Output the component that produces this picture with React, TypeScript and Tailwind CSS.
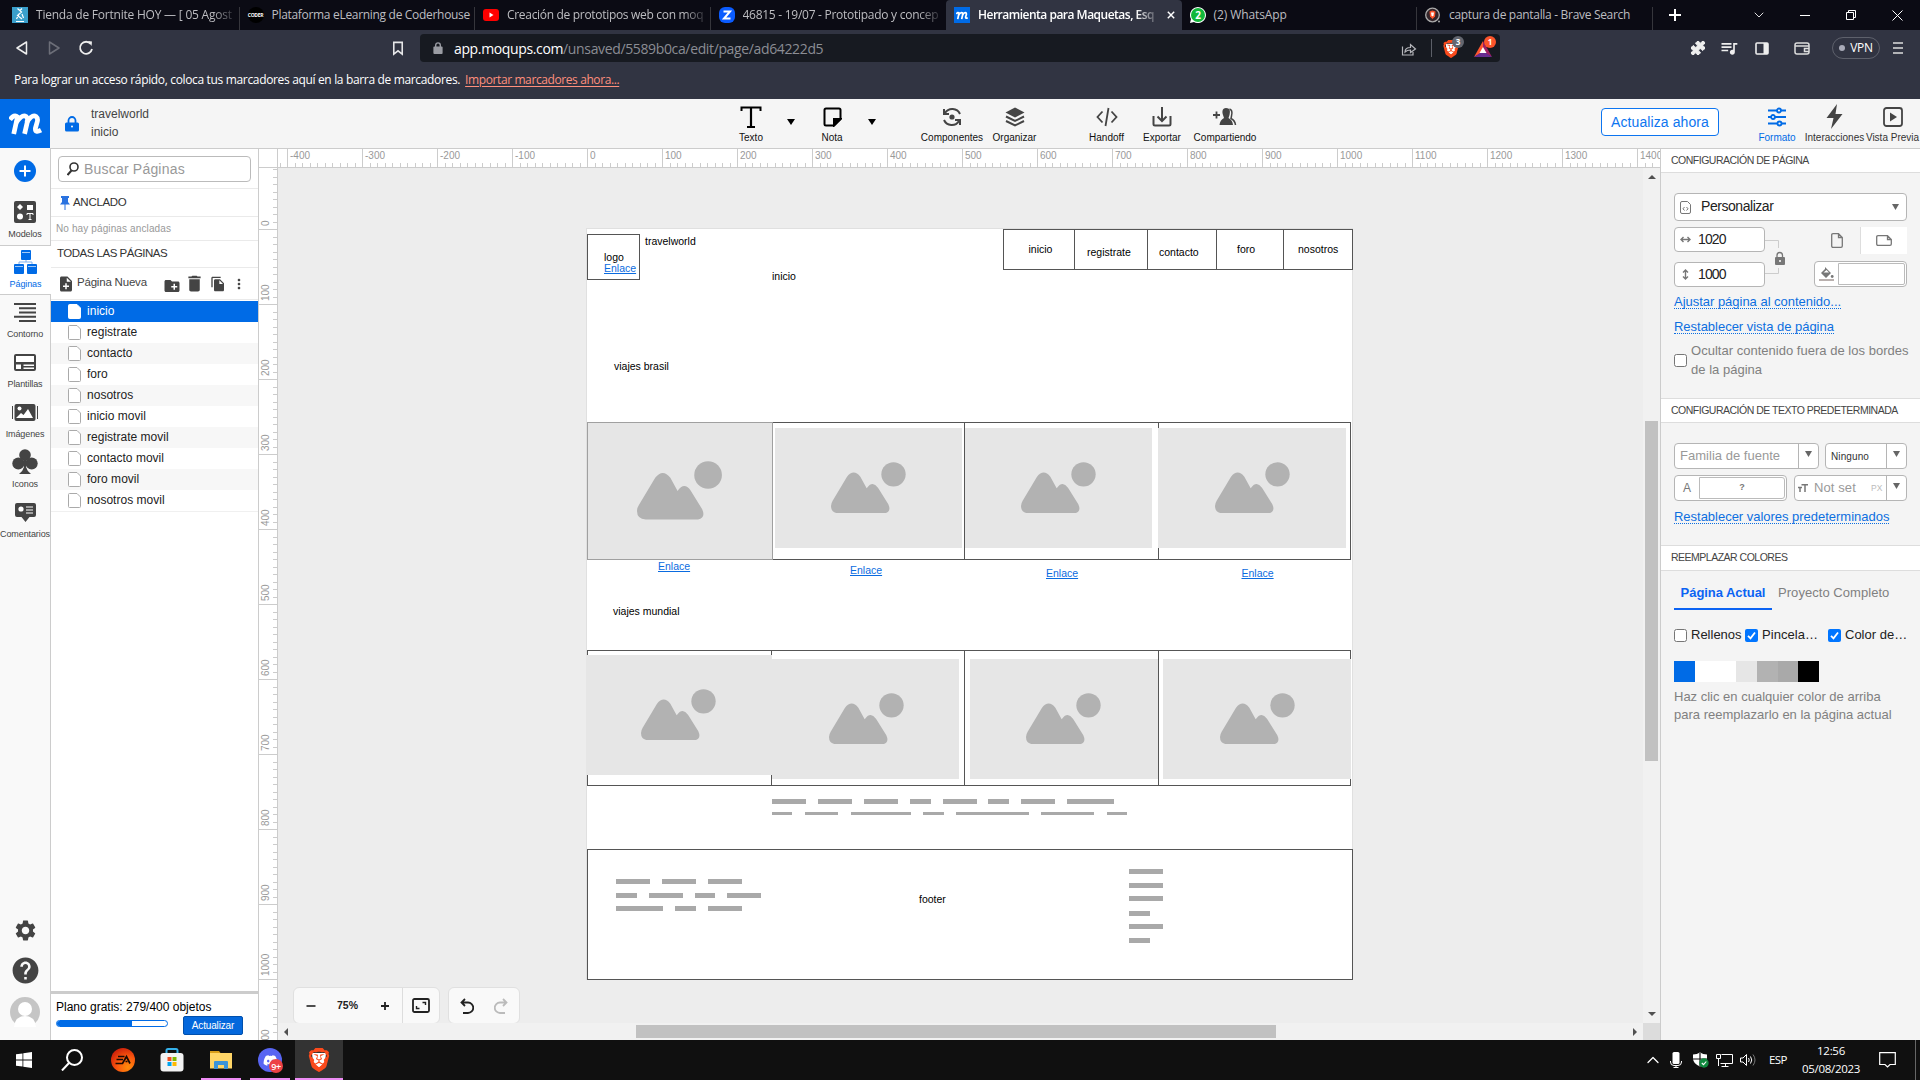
import React from "react";
import { Puzzle, ChevronDown, ChevronUp } from "lucide-react";
import { FaDiscord } from "react-icons/fa";
import { MdSettings, MdHelp, MdDelete, MdCreateNewFolder, MdNoteAdd, MdFileCopy, MdMoreVert, MdQueueMusic } from "react-icons/md";
import { SiBrave } from "react-icons/si";

type Box = [number, number, number, number];

const ARIAL = "font-['Liberation_Sans',Arial,sans-serif]";
const SEGOE = "font-['Open_Sans','Noto_Sans',sans-serif]";

/* ---------- Browser chrome ---------- */

function MGlyph({ className }: { className: string }) {
  return (
    <svg viewBox="0 0 35 23" className={className} fill="none" stroke="#fff" strokeWidth="5" strokeLinejoin="round">
      <path d="M1 7Q5.500 0.500 9 4L5 22" />
      <path d="M7.500 10Q14 1 18 3.500Q20.500 5.500 19.500 9L16.500 22" />
      <path d="M18.500 10Q24.500 1 28.500 3.500Q31 5.500 30 9L28 16Q27.500 21.500 34 18" />
    </svg>
  );
}

function BraveLion({ className }: { className: string }) {
  return (
    <div className={"relative " + className}>
      <svg viewBox="0 0 24 24" className="absolute inset-0 size-full"><path d="M5 5H19L18 15L12 20L6 15Z" fill="#fff" /></svg>
      <SiBrave className="relative size-full text-[#fb4a1c]" />
    </div>
  );
}

function TabIcon({ kind }: { kind: string }) {
  if (kind === "fort")
    return (
      <div className="flex size-4 items-center justify-center bg-[#3a9fcb]">
        <svg viewBox="0 0 16 16" className="size-4" fill="none" stroke="#fff" strokeWidth="1.2"><path d="M5.500 1.500L9.500 5L5.500 8.500L10 12M10 1.500L8 3.500M7 7L4.500 12M10 7L11.500 11M4 14.500H12" /></svg>
      </div>
    );
  if (kind === "coder")
    return <div className="flex size-4 items-center justify-center rounded-full bg-black text-[5px] leading-none font-bold tracking-[-0.3px] text-white">CODER</div>;
  if (kind === "yt")
    return (
      <svg viewBox="0 0 16 16" className="size-4"><rect y="2" width="16" height="12" rx="3" fill="#f00" /><path d="M6.500 5.500L10.500 8L6.500 10.500Z" fill="#fff" /></svg>
    );
  if (kind === "z")
    return (
      <svg viewBox="0 0 16 16" className="size-4"><rect width="16" height="16" rx="6" fill="#0b5cff" /><path d="M4.500 4.500H11L5 11.500H11.500" fill="none" stroke="#fff" strokeWidth="2" /></svg>
    );
  if (kind === "m")
    return <div className="flex size-4 items-center justify-center bg-[#006be6]"><MGlyph className="h-[9px] w-3" /></div>;
  if (kind === "wa")
    return (
      <svg viewBox="0 0 16 16" className="size-4"><path d="M0 16L1 12A8 8 0 1 1 4 15Z" fill="#fff" /><circle cx="8" cy="8" r="7" fill="#12b83b" /><text x="8" y="11.500" textAnchor="middle" fontSize="10" fontWeight="700" fill="#fff" fontFamily="Open Sans">2</text></svg>
    );
  return (
    <svg viewBox="0 0 16 16" className="size-4"><circle cx="7.500" cy="8" r="6.800" fill="#33252a" stroke="#aaa" strokeWidth="1.300" /><path d="M4.500 4.500L7.500 3.500L10.500 4.500L10 9.500L7.500 12L5 9.500Z" fill="#fb542b" /><path d="M6 5.500H9L8.500 8.500L7.500 9.500L6.500 8.500Z" fill="#fff" /><circle cx="14" cy="14.500" r="1" fill="#aaa" /></svg>
  );
}

const TABS = [
  { kind: "fort", title: "Tienda de Fortnite HOY — [ 05 Agost", cls: "tracking-[-0.22px]", fade: true },
  { kind: "coder", title: "Plataforma eLearning de Coderhouse", cls: "tracking-[-0.31px]" },
  { kind: "yt", title: "Creación de prototipos web con moq", cls: "tracking-[-0.31px]", fade: true },
  { kind: "z", title: "46815 - 19/07 - Prototipado y concep", cls: "tracking-[-0.27px]", fade: true },
  { kind: "m", title: "Herramienta para Maquetas, Esq", cls: "font-semibold tracking-[-0.5px]", active: true, fade: true },
  { kind: "wa", title: "(2) WhatsApp", cls: "tracking-[-0.1px]" },
  { kind: "brave", title: "captura de pantalla - Brave Search", cls: "tracking-[-0.31px]" },
];

function TabStrip() {
  return (
    <div className="flex h-[30px] bg-[#0b0b14] pl-1">
      {TABS.map((t, i) => (
        <div
          key={t.kind}
          className={
            "flex w-[235.5px] shrink-0 items-center pl-2 " +
            (t.active ? "rounded-t-[4px] bg-[#313442]" : "text-[#bdbdc1]")
          }
        >
          <TabIcon kind={t.kind} />
          <div className={"ml-2 text-[12px] whitespace-nowrap " + t.cls + (t.active ? " w-[180px] text-white" : " w-[200px]")}>
            <span className={t.fade ? "[mask-image:linear-gradient(to_right,#000_90%,rgba(0,0,0,0.25))]" : ""}>{t.title}</span>
          </div>
          {t.active && (
            <svg viewBox="0 0 10 10" className="ml-[9px] size-2" stroke="#fff" strokeWidth="1.800"><path d="M1 1L9 9M9 1L1 9" /></svg>
          )}
          {!t.active && i !== 3 && <div className="ml-auto h-[23px] w-px self-end bg-[#36363c]" />}
        </div>
      ))}
      <div className="flex flex-1 items-center pl-[16px]">
        <svg viewBox="0 0 12 12" className="size-3" stroke="#fff" strokeWidth="2"><path d="M6 0V12M0 6H12" /></svg>
        <ChevronDown className="ml-[70px] size-4 text-white" strokeWidth={1.300} />
        <svg viewBox="0 0 10 10" className="ml-[33px] size-[10px]" stroke="#fff"><path d="M0 5.500H10" /></svg>
        <svg viewBox="0 0 12 12" className="ml-[35px] size-[12px]" fill="none" stroke="#fff"><path d="M1.500 3.500H8.500V10.500H1.500ZM3.500 3.500V1.500H10.500V8.500H8.500" /></svg>
        <svg viewBox="0 0 11 11" className="ml-[35px] size-[11px]" stroke="#fff"><path d="M0.500 0.500L10.500 10.500M10.500 0.500L0.500 10.500" /></svg>
      </div>
    </div>
  );
}

function NavBar() {
  return (
    <div className="flex h-9 items-center">
      <svg viewBox="0 0 12 14" className="ml-4 h-[14px] w-3" fill="none" stroke="#eee" strokeWidth="1.500" strokeLinejoin="round"><path d="M10.500 1V13L1 7Z" /></svg>
      <svg viewBox="0 0 12 14" className="ml-5 h-[14px] w-3" fill="none" stroke="#6c6e78" strokeWidth="1.500" strokeLinejoin="round"><path d="M1.500 1V13L11 7Z" /></svg>
      <svg viewBox="0 0 16 16" className="ml-[18px] size-4" fill="none" stroke="#eee" strokeWidth="1.800"><path d="M12.800 4A6 6 0 1 0 14 9" /><path d="M10 1L14 1.500L13.500 6Z" fill="#eee" stroke="none" /></svg>
      <svg viewBox="0 0 12 16" className="ml-[298px] h-[15px] w-3" fill="none" stroke="#e6e6e8" strokeWidth="1.700"><path d="M1.500 1.500H10.500V14L6 10.500L1.500 14Z" /></svg>
      <div className="ml-4 flex h-7 w-[1080px] items-center rounded-[4px] bg-[#171a21]">
        <svg viewBox="0 0 10 13" className="ml-[13px] h-3 w-[10px]"><path d="M2.500 6V3.500A2.500 2.500 0 0 1 7.500 3.500V6" fill="none" stroke="#9a9ca3" strokeWidth="1.500" /><rect y="5" width="10" height="8" rx="1" fill="#9a9ca3" /></svg>
        <div className="ml-[11px] w-[936px] text-[14px] tracking-[-0.36px] text-[#8b8d94]"><span className="text-white">app.moqups.com</span>/unsaved/5589b0ca/edit/page/ad64222d5</div>
        <svg viewBox="0 0 16 14" className="mt-px ml-[11px] h-[14px] w-4" fill="none" stroke="#b5b6bb" strokeWidth="1.200"><path d="M1.500 4.500V13H12V10M4 10Q4 5.500 9.500 5.500V2.500L14.500 7L9.500 10.500V8Q6 8 4 10Z" /></svg>
        <div className="ml-3.5 h-[18px] w-px bg-[#5c5f68]" />
        <div className="relative ml-[10px] h-[22px] w-5">
          <BraveLion className="mt-[3px] size-[18px]" />
          <div className="absolute -top-px left-2.5 flex size-3 items-center justify-center rounded-full bg-[#63666f] text-[8px] font-bold text-white">3</div>
        </div>
        <div className="relative ml-3 h-[22px] w-6">
          <svg viewBox="0 0 18 16" className="mt-1 h-4 w-[18px]"><path d="M9 0L0 16L9 11Z" fill="#ff5630" /><path d="M9 0L18 16L9 11Z" fill="#9e1f63" /><path d="M0 16H18L9 10Z" fill="#662d91" /><path d="M9 6L12.500 12H5.500Z" fill="#fff" /></svg>
          <div className="absolute -top-px left-2.5 flex size-3 items-center justify-center rounded-full bg-[#fb542b] text-[8px] font-bold text-white">1</div>
        </div>
      </div>
      <Puzzle className="ml-[190px] size-4 fill-[#eee] text-[#eee]" strokeWidth={1.500} />
      <MdQueueMusic className="ml-[13px] size-[20px] text-[#eee]" />
      <svg viewBox="0 0 14 13" className="ml-[16px] h-[13px] w-[14px]"><rect x="1" y="1" width="12" height="11" rx="1" fill="none" stroke="#eee" strokeWidth="1.600" /><path d="M8.500 1H13V12H8.500Z" fill="#eee" /></svg>
      <svg viewBox="0 0 16 13" className="ml-[25px] h-[13px] w-4" fill="none" stroke="#ddd" strokeWidth="1.500"><rect x="1" y="1" width="14" height="11" rx="2" /><path d="M1 4H15M15 6.500H10.500V9.500H15" /></svg>
      <div className="ml-[22px] flex h-[22px] w-12 items-center justify-center gap-[5px] rounded-full border border-[#5e616c] text-[12px] tracking-[-0.3px] text-white"><div className="size-1.5 rounded-full bg-[#a9abb8]" />VPN</div>
      <svg viewBox="0 0 10 12" className="ml-[13px] h-3 w-[10px]" stroke="#ddd" strokeWidth="1.500"><path d="M0 1H10M0 6H10M0 11H10" /></svg>
    </div>
  );
}

/* ---------- App header ---------- */

function Tool({ label, width, children, color = "text-[#111]" }: { label: string; width: string; children: React.ReactNode; color?: string }) {
  return (
    <div className={"flex flex-col items-center " + width + " " + color}>
      <div className="mt-1.5 flex h-[23px] items-center">{children}</div>
      <div className="mt-[4px] text-[10px] leading-3 whitespace-nowrap">{label}</div>
    </div>
  );
}

function Arrow() {
  return <svg viewBox="0 0 8 6" className="mt-5 h-[6px] w-2"><path d="M0 0H8L4 6Z" fill="#000" /></svg>;
}

function AppHeader() {
  return (
    <div className="flex h-[50px] border-b border-[#ccc] bg-[#f5f5f5]">
      <div className="flex h-[50px] w-[50px] items-center justify-center bg-[#006be6]"><MGlyph className="h-[22px] w-[33px]" /></div>
      <svg viewBox="0 0 14 16" className="mt-[17px] ml-[15px] h-4 w-[14px]"><path d="M3.500 8V4.500A3.500 3.500 0 0 1 10.500 4.500V8" fill="none" stroke="#006be6" strokeWidth="1.800" /><rect y="6.500" width="14" height="9" rx="1.500" fill="#006be6" /><circle cx="7" cy="10.500" r="1" fill="#fff" /></svg>
      <div className="ml-3 w-[629px] pt-1.5 text-[12px] leading-[18px] text-[#444]">travelworld<br />inicio</div>
      <Tool label="Texto" width="w-[62px]">
        <svg viewBox="0 0 22 22" className="size-[22px]" fill="none" stroke="#000" strokeWidth="2"><path d="M1.500 5V1.500H20.500V5" /><path d="M11 1V21M7 21H15" strokeWidth="2.200" /></svg>
      </Tool>
      <div className="w-[17px] pl-[5px]"><Arrow /></div>
      <Tool label="Nota" width="w-[66px]">
        <svg viewBox="0 0 19 20" className="h-5 w-[19px]" fill="none" stroke="#000" strokeWidth="2"><path d="M3 1.500H16Q17.500 1.500 17.500 3V12L11 18.500H3Q1.500 18.500 1.500 17V3Q1.500 1.500 3 1.500Z" /><path d="M11 18.500V12H17.500Z" fill="#000" /></svg>
      </Tool>
      <div className="w-[51px] pl-[3px]"><Arrow /></div>
      <Tool label="Componentes" width="w-[72px]">
        <svg viewBox="0 0 20 20" className="size-5" fill="none" stroke="#444" strokeWidth="2"><circle cx="10" cy="10" r="2.600" fill="#444" stroke="none" /><path d="M3 6A8.500 8.500 0 0 1 18 7M17 14A8.500 8.500 0 0 1 2 13" /><path d="M2 2V7H7M18 18V13H13" /></svg>
      </Tool>
      <Tool label="Organizar" width="w-[53px]">
        <svg viewBox="0 0 20 20" className="size-5"><path d="M10 0.500L19.500 5.500L10 10.500L0.500 5.500Z" fill="#444" /><path d="M1 9.500L10 14L19 9.500M1 14L10 18.500L19 14" fill="none" stroke="#444" strokeWidth="2" /></svg>
      </Tool>
      <Tool label="Handoff" width="ml-10 w-[51px]">
        <svg viewBox="0 0 22 20" className="h-5 w-[22px]" fill="none" stroke="#444" strokeWidth="1.800"><path d="M6.500 4.500L1.500 10L6.500 15.500M15.500 4.500L20.500 10L15.500 15.500M12.500 1L9.500 19" /></svg>
      </Tool>
      <Tool label="Exportar" width="w-[60px]">
        <svg viewBox="0 0 20 20" className="size-5" fill="none" stroke="#444" strokeWidth="2"><path d="M1.500 9V17Q1.500 18.500 3 18.500H17Q18.500 18.500 18.500 17V9M10 0V13.500M5.500 9.500L10 14L14.500 9.500" /></svg>
      </Tool>
      <Tool label="Compartiendo" width="w-[66px]">
        <svg viewBox="0 0 24 20" className="h-5 w-6"><path d="M0 8H7M3.500 4.500V11.500" stroke="#444" strokeWidth="1.800" /><path d="M13 1C9 1 9 5 10 8L11 11Q7 13 6.500 18H20Q19.500 13 15.500 11L16.500 8C17.500 4 17 1 13 1Z" fill="#444" /><path d="M16.500 2Q20 3 18.500 9L18 11.500Q22 13.500 22.500 18" fill="none" stroke="#444" strokeWidth="1.500" /></svg>
      </Tool>
      <div className="mt-[9px] ml-[343px] flex h-7 w-[118px] items-center justify-center rounded-[4px] border border-[#0d75f0] bg-white text-[14px] tracking-[0.1px] text-[#0d75f0]">Actualiza ahora</div>
      <Tool label="Formato" width="ml-[35px] w-[46px]" color="text-[#006be6]">
        <svg viewBox="0 0 18 20" className="h-5 w-[18px]" fill="#f5f5f5" stroke="#006be6" strokeWidth="1.800"><path d="M0 3.500H18M0 10H18M0 16.500H18" /><circle cx="11" cy="3.500" r="2" /><circle cx="5" cy="10" r="2" /><circle cx="11.500" cy="16.500" r="2" /></svg>
      </Tool>
      <Tool label="Interacciones" width="ml-[4px] w-[61px]" color="text-[#333]">
        <svg viewBox="0 0 17 25" className="h-[25px] w-[17px]"><path d="M11 0L0.500 14H7.500L5 25L16.500 10H9.500Z" fill="#444" /></svg>
      </Tool>
      <Tool label="Vista Previa" width="w-[55px]" color="text-[#333]">
        <svg viewBox="0 0 20 20" className="size-5"><rect x="1" y="1" width="18" height="18" rx="2.500" fill="none" stroke="#444" strokeWidth="1.800" /><path d="M7 5.500L14 10L7 14.500Z" fill="#444" /></svg>
      </Tool>
    </div>
  );
}

/* ---------- Left rail ---------- */

function RailItem({ label, active, children }: { label: string; active?: boolean; children: React.ReactNode }) {
  return (
    <div className={"flex h-[50px] w-[51px] flex-col items-center " + (active ? "border-y border-[#ccc] bg-white text-[#006be6]" : "border-r border-[#ccc] pt-px text-[#444]")}>
      <div className="flex h-8 items-center">{children}</div>
      <div className="text-[9px] leading-[12px] whitespace-nowrap tracking-[-0.1px]">{label}</div>
    </div>
  );
}

function Rail() {
  return (
    <div className="flex w-[51px] shrink-0 flex-col bg-[#f9f9f9]">
      <div className="flex h-[47px] justify-center border-r border-[#ccc] pt-[12px]">
        <svg viewBox="0 0 22 22" className="size-[22px]"><circle cx="11" cy="11" r="11" fill="#006be6" /><path d="M11 5.500V16.500M5.500 11H16.500" stroke="#fff" strokeWidth="2" /></svg>
      </div>
      <RailItem label="Modelos">
        <svg viewBox="0 0 22 22" className="size-[22px]"><rect width="22" height="22" rx="2" fill="#444" /><path d="M6 3L9 6L6 9L3 6Z" fill="#fff" /><rect x="13" y="4" width="6" height="5" fill="#fff" /><circle cx="6" cy="15.500" r="3" fill="#fff" /><path d="M13 14V12.500H19V14M16 12.500V18.500M14.500 18.500H17.500" stroke="#fff" fill="none" /></svg>
      </RailItem>
      <RailItem label="Páginas" active>
        <svg viewBox="0 0 23 24" className="h-6 w-[23px]" fill="#006be6"><rect x="7" width="10" height="10" rx="1" /><rect y="14" width="10" height="10" rx="1" /><rect x="13" y="14" width="10" height="10" rx="1" /><path d="M8 2.500H16M1 16.500H9M14 16.500H22" stroke="#cfe2fa" strokeWidth="0.800" /><path d="M12 10V12M5 14V12H18V14" fill="none" stroke="#7fb0ee" /></svg>
      </RailItem>
      <RailItem label="Contorno">
        <svg viewBox="0 0 22 19" className="h-[19px] w-[22px]" stroke="#444" strokeWidth="1.900"><path d="M0 1H22M5 5.200H22M5 9.500H22M0 13.700H22M5 18H22" /></svg>
      </RailItem>
      <RailItem label="Plantillas">
        <svg viewBox="0 0 22 17" className="h-[17px] w-[22px]"><rect width="22" height="17" rx="2" fill="#444" /><path d="M2 2H20V8H2ZM2 10.500H7V15H2ZM9.500 10.500H20V12H9.500ZM9.500 13.500H20V15H9.500Z" fill="#fff" /></svg>
      </RailItem>
      <RailItem label="Imágenes">
        <svg viewBox="0 0 26 17" className="h-[17px] w-[26px]"><rect x="2.500" width="21" height="17" rx="2" fill="#444" /><path d="M0.500 2V15M25.500 2V15" stroke="#444" /><circle cx="7.500" cy="4.500" r="2" fill="#fff" /><path d="M4 14L9 9L11.500 11L16 5L21 14Z" fill="#fff" /></svg>
      </RailItem>
      <RailItem label="Iconos">
        <svg viewBox="0 0 26 26" className="h-[26px] w-[26px]" fill="#444"><circle cx="13" cy="6" r="5.800" /><circle cx="6.300" cy="14.500" r="6" /><circle cx="19.700" cy="14.500" r="6" /><path d="M13 8L16 14L14 18Q15 22 19 25H7Q11 22 12 18L10 14Z" /></svg>
      </RailItem>
      <RailItem label="Comentarios">
        <svg viewBox="0 0 21 19" className="h-[19px] w-[21px]"><path d="M2 0H19Q21 0 21 2V12Q21 14 19 14H14.500L10.500 19L6.500 14H2Q0 14 0 12V2Q0 0 2 0Z" fill="#444" /><circle cx="6" cy="6" r="2.600" fill="#fff" /><path d="M11 4H18M11 7H18M11 10H18" stroke="#fff" /></svg>
      </RailItem>
      <div className="flex flex-1 flex-col items-center justify-end border-r border-[#ccc] pb-[13px]">
        <MdSettings className="size-[25px] text-[#444]" />
        <MdHelp className="mt-[12px] size-[31px] text-[#444]" />
        <svg viewBox="0 0 30 30" className="mt-[11px] size-[30px]"><circle cx="15" cy="15" r="15" fill="#c5c5c5" /><circle cx="15" cy="12" r="7" fill="#fff" /><path d="M4 30Q5 19 15 19Q25 19 26 30Z" fill="#fff" /></svg>
      </div>
    </div>
  );
}

/* ---------- Pages panel ---------- */

const PAGES = ["inicio", "registrate", "contacto", "foro", "nosotros", "inicio movil", "registrate movil", "contacto movil", "foro movil", "nosotros movil"];

function PagesPanel() {
  return (
    <div className="flex w-[207px] shrink-0 flex-col border-t border-[#ccc] bg-white text-[#333]">
      <div className="mt-[7px] ml-[7px] flex h-[26px] w-[193px] items-center rounded-[4px] border border-[#bbb] text-[14px] text-[#999]">
        <svg viewBox="0 0 12 14" className="mr-[6px] ml-2 h-[14px] w-3" fill="none" stroke="#333" strokeWidth="1.600"><circle cx="7" cy="5" r="4" /><path d="M4.500 8.500L0.500 13" strokeWidth="2" /></svg>
        <span className="-ml-px tracking-[0.2px]">Buscar Páginas</span>
      </div>
      <div className="mt-1.5 flex h-7 items-center border-t border-[#eaeaea] pl-[9px] text-[11.500px] tracking-[-0.3px]">
        <svg viewBox="0 0 10 14" className="mr-[3px] h-[14px] w-[10px]" fill="#2a73e0"><path d="M1 0H9V2H8V6L10 8.500H5.500V14H4.500V8.500H0L2 6V2H1Z" /></svg>ANCLADO
      </div>
      <div className="flex h-6 items-center border-t border-[#eaeaea] pl-[5px] text-[10px] tracking-[0.12px] text-[#999]">No hay páginas ancladas</div>
      <div className="flex h-[27px] items-center border-t border-[#eaeaea] pl-1.5 text-[11.500px] tracking-[-0.5px]">TODAS LAS PÁGINAS</div>
      <div className="flex h-[33px] items-center border-y border-[#eaeaea] pl-[6px] text-[12px] text-[#444]">
        <MdNoteAdd className="size-[18px]" />
        <span className="mb-0.5 ml-[2px] w-[84px] text-[11.500px] tracking-[-0.2px] whitespace-nowrap">Página Nueva</span>
        <MdCreateNewFolder className="mt-1 ml-[2px] size-[18px]" />
        <MdDelete className="ml-[3px] size-[21px]" />
        <MdFileCopy className="ml-[5px] size-[16px]" />
        <MdMoreVert className="ml-[5px] size-4" />
      </div>
      <div className="h-px" />
      {PAGES.map((p, i) => (
        <div key={p} className={"flex h-[21px] items-center pl-[17px] text-[12px] " + (i === 0 ? "bg-[#006be6] font-medium text-white" : i % 2 ? "text-[#222]" : "bg-[#f7f7f7] text-[#222]")}>
          <svg viewBox="0 0 13 15" className="mr-[6px] h-[15px] w-[13px]"><path d="M0.500 1.500Q0.500 0.500 1.500 0.500H9L12.500 4V13.500Q12.500 14.500 11.500 14.500H1.500Q0.500 14.500 0.500 13.500Z" fill="#fff" stroke={i === 0 ? "#fff" : "#aaa"} /></svg>
          <span className="mb-px tracking-[0.02px]">{p}</span>
        </div>
      ))}
      <div className="flex-1 border-t border-[#f0f0f0]" />
      <div className="h-[49px] border-t-[3px] border-[#ccc] pl-[5px] text-black">
        <div className="mt-1 text-[12px] leading-[18px] whitespace-nowrap">Plano gratis: 279/400 objetos</div>
        <div className="flex">
          <div className="mt-1 h-[7px] w-[112px] overflow-hidden rounded-full border border-[#006be6]"><div className="h-full w-[68%] bg-[#006be6]" /></div>
          <div className="ml-[15px] flex h-[19px] w-[60px] items-center justify-center rounded-[2px] border border-[#0050ad] bg-[#0468dc] text-[10px] tracking-[-0.15px] text-white">Actualizar</div>
        </div>
      </div>
    </div>
  );
}

/* ---------- Rulers ---------- */

function range(a: number, b: number) {
  return Array.from({ length: b - a }, (_, i) => a + i);
}

function HRuler() {
  return (
    <svg width="1401" height="20" className="block shrink-0 bg-white">
      {range(-42, 143).map((n) => {
        const x = Math.round(328 + n * 7.5) + 0.5;
        return x < 20 ? null : <path key={n} d={n % 10 === 0 ? `M${x} 0V20` : `M${x} 15V19`} stroke="#ccc" />;
      })}
      {range(-4, 15).map((n) => (
        <text key={n} x={331 + n * 75} y="11" fontSize="10" fill="#999" fontFamily="Liberation Sans">{n * 100}</text>
      ))}
      <path d="M18.500 0V19M0 19.500H1401M0 0.500H1401" stroke="#ccc" />
    </svg>
  );
}

function VRuler() {
  return (
    <svg width="19" height="872" className="block shrink-0 bg-white">
      {range(-8, 108).map((n) => {
        const y = Math.round(61 + n * 7.5) + 0.5;
        return <path key={n} d={n % 10 === 0 ? `M0 ${y}H18` : `M14 ${y}H18`} stroke="#ccc" />;
      })}
      {range(0, 12).map((n) => (
        <text key={n} x="0" y="0" transform={`translate(9.500 ${58 + n * 75}) rotate(-90)`} fontSize="10" fill="#999" fontFamily="Liberation Sans">{n * 100}</text>
      ))}
      <path d="M18.500 0V872" stroke="#ccc" />
    </svg>
  );
}

/* ---------- Free canvas ---------- */

const OX = 278;
const OY = 168;
const at = ([x1, y1, x2, y2]: Box) => ({ left: x1 - OX, top: y1 - OY, width: x2 - x1, height: y2 - y1 });

const FRAMES: Box[] = [
  [587, 234, 640, 280],
  [1003, 229, 1075, 270], [1074, 229, 1148, 270], [1147, 229, 1217, 270], [1216, 229, 1284, 270], [1283, 229, 1353, 270],
  [772, 422, 965, 560], [964, 422, 1159, 560], [1158, 422, 1351, 560],
  [587, 650, 772, 786], [771, 650, 965, 786], [964, 650, 1159, 786], [1158, 650, 1351, 786],
  [587, 849, 1353, 980],
];

const IMAGES: { box: Box; mx: number; my: number; w: number; edge?: boolean }[] = [
  { box: [587, 422, 773, 560], mx: 637, my: 461.3, w: 85.3, edge: true },
  { box: [775, 427.5, 962, 547.5], mx: 831.3, my: 461.7, w: 75 },
  { box: [965, 427.5, 1152, 547.5], mx: 1021, my: 461.7, w: 75 },
  { box: [1158, 427.5, 1346, 547.5], mx: 1214.7, my: 461.7, w: 75 },
  { box: [586, 655, 772, 775], mx: 640.7, my: 688.8, w: 75 },
  { box: [772, 658.5, 959, 778.5], mx: 828.6, my: 692.7, w: 75 },
  { box: [970, 658.5, 1157.5, 778.5], mx: 1026.3, my: 692.7, w: 75 },
  { box: [1163, 658.5, 1351, 778.5], mx: 1220, my: 692.7, w: 75 },
];

const LABELS: [string, number, number, boolean?][] = [
  ["travelworld", 645, 241], ["logo", 604, 257], ["Enlace", 604, 268, true], ["inicio", 772, 276],
  ["inicio", 1028.5, 249], ["registrate", 1087, 252], ["contacto", 1159, 252], ["foro", 1237, 249], ["nosotros", 1298, 249],
  ["viajes brasil", 614, 366], ["Enlace", 658, 566, true], ["Enlace", 850, 570, true], ["Enlace", 1046, 573, true], ["Enlace", 1241.5, 573, true],
  ["viajes mundial", 613, 611], ["footer", 919, 899],
];

const BARS: { y: number; h: number; xs: [number, number][] }[] = [
  { y: 799, h: 5, xs: [[772, 806], [818, 851.5], [863.5, 897.5], [910, 930.5], [942.5, 976.5], [988, 1009], [1021, 1055], [1067, 1114]] },
  { y: 812, h: 3, xs: [[772, 792], [805, 838], [851, 911], [923, 943.5], [956, 1029], [1041, 1094], [1107, 1127]] },
  { y: 879, h: 5, xs: [[616, 650], [662, 695.5], [707.5, 741.5]] },
  { y: 893, h: 5, xs: [[616, 636.5], [648.5, 682.5], [694.5, 715], [727, 761]] },
  { y: 906, h: 5, xs: [[616, 662.5], [675, 695.5], [707.5, 741.5]] },
  { y: 869, h: 5, xs: [[1129, 1163]] }, { y: 883, h: 5, xs: [[1129, 1163]] }, { y: 896, h: 5, xs: [[1129, 1163]] },
  { y: 911, h: 5, xs: [[1129, 1149.5]] }, { y: 924, h: 5, xs: [[1129, 1163]] }, { y: 938, h: 5, xs: [[1129, 1149.5]] },
];

function Canvas() {
  return (
    <div className="relative h-[855px] w-[1365px] overflow-hidden bg-[#ededed]">
      <div className="absolute border border-[#e0e0e0] bg-white" style={at([586, 228, 1353, 980])} />
      {FRAMES.map((b, i) => <div key={i} className="absolute border border-[#555]" style={at(b)} />)}
      {IMAGES.map((im, i) => (
        <React.Fragment key={i}>
          <div className={"absolute bg-[#e6e6e6] " + (im.edge ? "border border-[#a0a0a0]" : "")} style={at(im.box)} />
          <svg viewBox="784 755 225 155" className="absolute" style={at([im.mx, im.my, im.mx + im.w, im.my + im.w * 0.689])} fill="#b2b2b2">
            <path d="M807 909Q784 908 784 887Q784 879 789 871L832 799Q852 774 872 799L891 834Q908 809 925 832L956 882Q966 905 945 909Z" />
            <circle cx="971.500" cy="792" r="36.500" />
          </svg>
        </React.Fragment>
      ))}
      {BARS.flatMap((r) => r.xs.map(([a, b]) => <div key={r.y + "-" + a} className="absolute bg-[#a9a9a9]" style={at([a, r.y, b, r.y + r.h])} />))}
      {LABELS.map(([t, x, y, link], i) => (
        <div key={i} className={"absolute text-[10.500px] leading-3 whitespace-nowrap " + (link ? "text-[#0a6be0] underline" : "text-black")} style={{ left: x - OX, top: y - OY - 6 }}>{t}</div>
      ))}
      <div className="absolute -bottom-px left-[15px] flex gap-2">
        <div className="flex h-[37px] w-[147px] items-center rounded-[6px] border border-[#e0e0e0] bg-[#f9f9f9]">
          <svg viewBox="0 0 10 10" className="ml-3 size-[10px]" stroke="#222" strokeWidth="1.600"><path d="M0.500 5H9.500" /></svg>
          <span className="ml-[21px] w-[23px] text-[10.500px] font-bold text-[#222]">75%</span>
          <svg viewBox="0 0 10 10" className="ml-[20px] size-[10px]" stroke="#222" strokeWidth="1.800"><path d="M1 5H9M5 1V9" /></svg>
          <div className="ml-[12px] h-full w-px bg-[#ddd]" />
          <svg viewBox="0 0 18 15" className="ml-[9px] h-[15px] w-[18px]" fill="none" stroke="#222" strokeWidth="1.800"><rect x="1" y="1" width="16" height="13" rx="1.500" /><path d="M10.500 4.500H13.500V7M4.500 8V10.500H7.500" strokeWidth="1.400" /></svg>
        </div>
        <div className="flex h-[37px] w-[72px] items-center rounded-[6px] border border-[#e0e0e0] bg-[#f9f9f9]">
          <svg viewBox="0 0 14 16" className="ml-[11px] h-4 w-[14px]" fill="none" stroke="#222" strokeWidth="1.800"><path d="M3 15H8A5.200 5.200 0 0 0 8 4.500H1.500M5 1L1.500 4.500L5 8" /></svg>
          <svg viewBox="0 0 14 16" className="ml-[20px] h-4 w-[14px]" fill="none" stroke="#bbb" strokeWidth="1.800"><path d="M11 15H6A5.200 5.200 0 0 1 6 4.500H12.500M9 1L12.500 4.500L9 8" /></svg>
        </div>
      </div>
    </div>
  );
}

function Stage() {
  return (
    <div className="flex w-[1402px] shrink-0 flex-col border-l border-[#ccc]">
      <HRuler />
      <div className="flex h-[872px]">
        <VRuler />
        <div className="flex flex-col">
          <div className="flex">
            <Canvas />
            <div className="flex w-[17px] flex-col items-center bg-[#f1f1f1]">
              <svg viewBox="0 0 8 4" className="mt-[7px] h-1 w-2"><path d="M0 4H8L4 0Z" fill="#505050" /></svg>
              <div className="mt-[242px] h-[340px] w-[13px] bg-[#c1c1c1]" />
              <svg viewBox="0 0 8 4" className="mt-auto mb-[7px] h-1 w-2"><path d="M0 0H8L4 4Z" fill="#505050" /></svg>
            </div>
          </div>
          <div className="flex h-[17px] items-center bg-[#f1f1f1]">
            <svg viewBox="0 0 4 8" className="ml-[6px] h-2 w-1"><path d="M4 0V8L0 4Z" fill="#505050" /></svg>
            <div className="ml-[348px] h-[13px] w-[640px] bg-[#c1c1c1]" />
            <svg viewBox="0 0 4 8" className="mr-[6px] ml-auto h-2 w-1"><path d="M0 0V8L4 4Z" fill="#505050" /></svg>
            <div className="h-full w-[17px] bg-[#dcdcdc]" />
          </div>
        </div>
      </div>
    </div>
  );
}

/* ---------- Format panel ---------- */

function Check({ on }: { on?: boolean }) {
  return on ? (
    <svg viewBox="0 0 13 13" className="size-[13px] shrink-0"><rect width="13" height="13" rx="2" fill="#0075ff" /><path d="M3 6.800L5.500 9.300L10 3.500" fill="none" stroke="#fff" strokeWidth="1.800" /></svg>
  ) : (
    <div className="size-[13px] shrink-0 rounded-[2.500px] border border-[#767676] bg-white" />
  );
}

function Link({ children, cls }: { children: string; cls: string }) {
  return <div className={"w-max border-b border-dotted border-[#0d6fe0] text-[13px] leading-[13px] tracking-[-0.02px] text-[#0d6fe0] " + cls}>{children}</div>;
}

function Down({ cls }: { cls: string }) {
  return <svg viewBox="0 0 7 6" className={"h-[6px] w-[7px] " + cls}><path d="M0 0H7L3.500 6Z" fill="#666" /></svg>;
}

const FIELD = "flex items-center rounded-[4px] border border-[#b5b5b5] bg-white";
const TITLE = "flex items-center bg-white pl-[10px] text-[10.500px] tracking-[-0.5px] whitespace-nowrap text-[#444]";

function FormatPanel() {
  return (
    <div className="flex w-[260px] flex-col border-t border-l border-[#ccc] bg-[#f4f4f4]">
      <div className={TITLE + " h-[24px] border-b border-[#ddd]"}>CONFIGURACIÓN DE PÁGINA</div>
      <div className="flex h-[225px] flex-col pl-[13px]">
        <div className={FIELD + " mt-5 h-7 w-[233px] text-[14px] text-[#222]"}>
          <svg viewBox="0 0 11 13" className="mr-[10px] ml-[5px] h-[13px] w-[11px]" fill="none" stroke="#777"><path d="M2 0.500H7.500L10.500 3.500V11Q10.500 12.500 9 12.500H2Q0.500 12.500 0.500 11V2Q0.500 0.500 2 0.500ZM4.500 6L3 7.800L4.500 9.500M6.500 6L8 7.800L6.500 9.500" /></svg>
          <span className="-mt-0.5 tracking-[-0.45px]">Personalizar</span>
          <Down cls="mr-[7px] ml-auto" />
        </div>
        <div className="mt-[6px] flex">
          <div className="flex flex-col gap-[10px] text-[14px] text-[#222]">
            <div className={FIELD + " h-[25px] w-[91px]"}>
              <svg viewBox="0 0 11 7" className="mr-[7px] ml-[5px] h-[7px] w-[11px]" fill="none" stroke="#777" strokeWidth="1.400"><path d="M1 3.500H10M3.500 1L1 3.500L3.500 6M7.500 1L10 3.500L7.500 6" /></svg><span className="tracking-[-0.900px]">1020</span>
            </div>
            <div className={FIELD + " h-[25px] w-[91px]"}>
              <svg viewBox="0 0 7 11" className="mr-[9px] ml-[7px] h-[11px] w-[7px]" fill="none" stroke="#777" strokeWidth="1.400"><path d="M3.500 1V10M1 3.500L3.500 1L6 3.500M1 7.500L3.500 10L6 7.500" /></svg><span className="tracking-[-0.900px]">1000</span>
            </div>
          </div>
          <svg viewBox="0 0 22 60" className="h-[60px] w-[22px]"><path d="M0 13.500H13.500V21M0 46.500H13.500V41" fill="none" stroke="#ccc" /><path d="M12 32V28.500Q12 25.500 14.700 25.500Q17.500 25.500 17.500 28.500V32" fill="none" stroke="#777" strokeWidth="1.300" /><rect x="10" y="30" width="10" height="8" rx="1" fill="#777" /><circle cx="15" cy="34" r="1" fill="#fff" /></svg>
          <div className="ml-[27px] flex flex-col">
            <div className="flex h-[27px] items-center">
              <svg viewBox="0 0 12 15" className="ml-[17px] h-[15px] w-3" fill="none" stroke="#777"><path d="M2 0.700H7.500L11.300 4.500V13Q11.300 14.300 10 14.300H2Q0.700 14.300 0.700 13V2Q0.700 0.700 2 0.700ZM7.500 1V4.500H11" strokeWidth="1.300" /></svg>
              <div className="ml-[17px] flex h-[27px] w-[47px] items-center justify-center border-l border-[#ddd] bg-white">
                <svg viewBox="0 0 16 11" className="h-[11px] w-4" fill="none" stroke="#777" strokeWidth="1.300"><path d="M2 0.700H11.500L15.300 4.500V9Q15.300 10.300 14 10.300H2Q0.700 10.300 0.700 9V2Q0.700 0.700 2 0.700ZM11.500 1V4.500H15" /></svg>
              </div>
            </div>
            <div className={FIELD + " mt-[7px] h-[26px] w-[93px] pl-[4px]"}>
              <div className="flex w-[15px] flex-col items-center border-b-2 border-[#b9b0ae]"><svg viewBox="0 0 14 12" className="h-3 w-[14px]" fill="#777"><path d="M5 0L11 6L6 11L1 6L5 2Z" /><circle cx="12.200" cy="9.500" r="1.400" /><path d="M3.500 5.500H9L6.500 3Z" fill="#fff" /></svg></div>
              <div className="ml-1 h-[22px] w-[67px] rounded-r-[2px] border border-[#bbb]" />
            </div>
          </div>
        </div>
        <Link cls="mt-[8px]">Ajustar página al contenido...</Link>
        <Link cls="mt-[11px]">Restablecer vista de página</Link>
        <div className="mt-[7px] flex items-center gap-1 text-[13px] leading-[19px] text-[#808080]"><Check /><div className="tracking-[0.02px] whitespace-nowrap">Ocultar contenido fuera de los bordes<br />de la página</div></div>
      </div>
      <div className={TITLE + " h-[25px] border-y border-[#ddd]"}>CONFIGURACIÓN DE TEXTO PREDETERMINADA</div>
      <div className="flex h-[122px] flex-col pl-[13px]">
        <div className="mt-5 flex gap-1.5">
          <div className={FIELD + " h-[26px] w-[145px] pl-[5px] text-[13px] text-[#999]"}>
            <span className="w-[118px] tracking-[0.02px]">Familia de fuente</span>
            <div className="h-full w-px bg-[#b5b5b5]" /><Down cls="mb-1 ml-1.5" />
          </div>
          <div className={FIELD + " h-[26px] w-[82px] pl-[5px] text-[10px] text-[#333]"}>
            <span className="w-[55px] tracking-[0.1px]">Ninguno</span>
            <div className="h-full w-px bg-[#b5b5b5]" /><Down cls="mb-1 ml-1.5" />
          </div>
        </div>
        <div className="mt-1.5 flex gap-[7px]">
          <div className={FIELD + " h-[26px] w-[113px] text-[#777]"}>
            <span className="ml-[8px] w-4 text-[12px]">A</span>
            <div className="flex h-[22px] w-[86px] items-center justify-center rounded-r-[3px] border border-[#bbb] text-[9px] font-bold">?</div>
          </div>
          <div className={FIELD + " h-[26px] w-[113px] text-[#777]"}>
            <svg viewBox="0 0 10 8" className="ml-[3px] h-2 w-[10px]" stroke="#777" strokeWidth="1.500" fill="none"><path d="M3.500 0.800H10M7 0.800V8M0 3.500H4M2 3.500V8" /></svg>
            <span className="ml-[6px] w-[57px] text-[13px] tracking-[0.1px] text-[#999]">Not set</span>
            <span className="w-[15px] text-[8.500px] text-[#bbb]">PX</span>
            <div className="h-full w-px bg-[#b5b5b5]" /><Down cls="mb-1 ml-1.5" />
          </div>
        </div>
        <Link cls="mt-[9px]">Restablecer valores predeterminados</Link>
      </div>
      <div className={TITLE + " h-[26px] border-y border-[#ddd]"}>REEMPLAZAR COLORES</div>
      <div className="flex flex-col pl-[13px] text-[13px] text-[#222]">
        <div className="mt-1.5 flex h-[33px]">
          <div className="flex w-[98px] items-center justify-center border-b-2 border-[#0b63f3] font-bold tracking-[-0.05px] text-[#0b63f3]">Página Actual</div>
          <div className="ml-[6px] flex items-center pb-0.5 tracking-[0.05px] whitespace-nowrap text-[#808080]">Proyecto Completo</div>
        </div>
        <div className="mt-[16px] flex h-[18px] items-center">
          <Check /><span className="ml-1 w-[54px]">Rellenos</span>
          <Check on /><span className="ml-1 w-[66px] tracking-[0.05px]">Pincela…</span>
          <Check on /><span className="ml-1 whitespace-nowrap">Color de…</span>
        </div>
        <div className="mt-[17px] flex h-[21px]">
          <div className="w-[21px] bg-[#006be6]" /><div className="w-[41px] bg-white" /><div className="w-[21px] bg-[#e6e6e6]" /><div className="w-[21px] bg-[#b2b2b2]" /><div className="w-5 bg-[#a9a9a9]" /><div className="w-[21px] bg-black" />
        </div>
        <div className="mt-[6px] leading-[18px] whitespace-nowrap text-[#808080]">Haz clic en cualquier color de arriba<br />para reemplazarlo en la página actual</div>
      </div>
    </div>
  );
}

/* ---------- Taskbar ---------- */

function TaskButton({ width, open, active, children }: { width: string; open?: boolean; active?: boolean; children: React.ReactNode }) {
  return (
    <div className={"relative flex h-10 items-center justify-center " + width + (active ? " bg-[#333]" : "")}>
      {children}
      {(open || active) && <div className={"absolute bottom-0 h-0.5 bg-[#ee8cf5] " + (active ? "inset-x-0" : "inset-x-1")} />}
    </div>
  );
}

function Taskbar() {
  return (
    <div className="flex h-10 items-center bg-[#101010] text-white">
      <TaskButton width="w-12"><svg viewBox="0 0 16 16" className="size-4" fill="#fff"><path d="M0 2.300L6.500 1.400V7.600H0ZM7.300 1.300L16 0V7.600H7.300ZM0 8.400H6.500V14.600L0 13.700ZM7.300 8.400H16V16L7.300 14.700Z" /></svg></TaskButton>
      <TaskButton width="w-12"><svg viewBox="0 0 22 22" className="size-[22px]" fill="none" stroke="#fff" strokeWidth="2"><circle cx="13.500" cy="8.500" r="7.500" /><path d="M8 14L1 21.500" /></svg></TaskButton>
      <TaskButton width="w-[54px]">
        <svg viewBox="0 0 24 24" className="size-6"><defs><radialGradient id="ea" cx="0.700" cy="0.800" r="0.900"><stop offset="0" stopColor="#ff8c0a" /><stop offset="0.500" stopColor="#f9560e" /><stop offset="1" stopColor="#c81a0a" /></radialGradient></defs><circle cx="12" cy="12" r="12" fill="url(#ea)" /><path d="M7 8.500H13.500M5.500 11.500H12M4.500 15.500H11.500L15.500 8.500L19 15.500M14.500 13.500H16.500" fill="none" stroke="#1a0a05" strokeWidth="1.700" /></svg>
      </TaskButton>
      <TaskButton width="w-[43px]">
        <svg viewBox="0 0 24 24" className="size-6"><path d="M6.500 6V2.500Q6.500 1 8 1H16Q17.500 1 17.500 2.500V6" fill="none" stroke="#35b1ea" strokeWidth="2" /><rect x="0.500" y="5" width="23" height="18.500" rx="3" fill="#f3f3f3" /><path d="M7.500 9H11.500V13H7.500Z" fill="#f25022" /><path d="M12.500 9H16.500V13H12.500Z" fill="#7fba00" /><path d="M7.500 14H11.500V18H7.500Z" fill="#00a4ef" /><path d="M12.500 14H16.500V18H12.500Z" fill="#ffb900" /></svg>
      </TaskButton>
      <TaskButton width="ml-[4px] w-12" open>
        <svg viewBox="0 0 22 18" className="h-[18px] w-[22px]"><path d="M0 0H9L10.500 2H0Z" fill="#d99e1a" /><path d="M0 2H22V17.500H0Z" fill="#ffd567" /><path d="M4 18V11Q4 10 5 10H17Q18 10 18 11V18H14V14H8V18Z" fill="#3c93d8" /></svg>
      </TaskButton>
      <TaskButton width="ml-[1px] w-12" open>
        <div className="relative flex size-6 items-center justify-center rounded-full bg-[#5865f2]"><FaDiscord className="size-[15px] text-white" />
          <div className="absolute -right-[1px] -bottom-[1px] flex size-[14px] items-center justify-center rounded-full bg-[#ed4245] text-[9px] leading-none font-semibold tracking-[-0.5px]">9+</div>
        </div>
      </TaskButton>
      <TaskButton width="ml-[1px] w-12" active><BraveLion className="size-6" /></TaskButton>
      <div className="ml-auto flex items-center">
        <ChevronUp className="size-5" strokeWidth={1.500} />
        <svg viewBox="0 0 12 16" className="ml-[7px] h-4 w-3"><rect x="2.500" width="7" height="12" rx="1.500" fill="#fff" /><path d="M0.500 9V10Q0.500 13.500 4 13.500H8Q11.500 13.500 11.500 10V9M6 13.500V15.500M3.500 15.500H8.500" fill="none" stroke="#fff" /></svg>
        <svg viewBox="0 0 16 16" className="ml-[11px] size-4"><path d="M7 0.500Q10 2.500 14 2.500V7Q13.500 12 7 14.500Q0.500 12 0 7V2.500Q4 2.500 7 0.500Z" fill="#fff" /><path d="M7 1V14M0 7H14" stroke="#101010" strokeWidth="1.200" /><circle cx="11" cy="11" r="4.700" fill="#10893e" /><path d="M8.800 11L10.500 12.700L13.300 9.500" fill="none" stroke="#fff" strokeWidth="1.100" /></svg>
        <svg viewBox="0 0 17 14" className="ml-[7px] h-[14px] w-[17px]" fill="none" stroke="#fff"><path d="M5.500 1.500H16.500V10.500H4.500M9.500 10.500V13M5.500 13.500H12.500M0.500 1.500H4.500V5.500H0.500ZM2.500 5.500V13" /></svg>
        <svg viewBox="0 0 17 14" className="ml-[7px] h-[14px] w-[17px]" fill="none" stroke="#fff"><path d="M0.500 5H3L6.500 1.500V12.500L3 9H0.500ZM8.500 5Q10 7 8.500 9M10.500 3.500Q13 7 10.500 10.500" /><path d="M13 1.500Q17 7 13 12.500" stroke="#777" /></svg>
        <span className="ml-[12px] w-5 text-[11.500px] tracking-[-0.600px]">ESP</span>
        <div className="ml-[12px] w-[60px] text-center text-[11.500px] leading-[18px] tracking-[-0.300px]">12:56<br />05/08/2023</div>
        <svg viewBox="0 0 17 16" className="mr-[19px] ml-[18px] h-4 w-[17px]" fill="none" stroke="#fff" strokeWidth="1.200"><path d="M0.700 0.700H16.300V12.500H11L8.500 15L6 12.500H0.700Z" /></svg>
        <div className="mr-1 h-10 w-px bg-[#666]" />
      </div>
    </div>
  );
}

export default function App() {
  return (
    <div className={"h-[1080px] w-[1920px] overflow-hidden " + ARIAL}>
      <div className={"h-[99px] bg-[#313442] " + SEGOE}>
        <TabStrip />
        <NavBar />
        <div className="flex h-7 items-center pl-[14px] text-[12px] whitespace-nowrap text-white">
          <span className="tracking-[-0.34px]">Para lograr un acceso rápido, coloca tus marcadores aquí en la barra de marcadores.</span>
          <span className="ml-[5px] tracking-[-0.4px] text-[#ff8f7d] underline underline-offset-2">Importar marcadores ahora...</span>
        </div>
      </div>
      <AppHeader />
      <div className="-mt-px flex h-[892px]">
        <Rail />
        <PagesPanel />
        <Stage />
        <FormatPanel />
      </div>
      <div className={SEGOE}><Taskbar /></div>
    </div>
  );
}
